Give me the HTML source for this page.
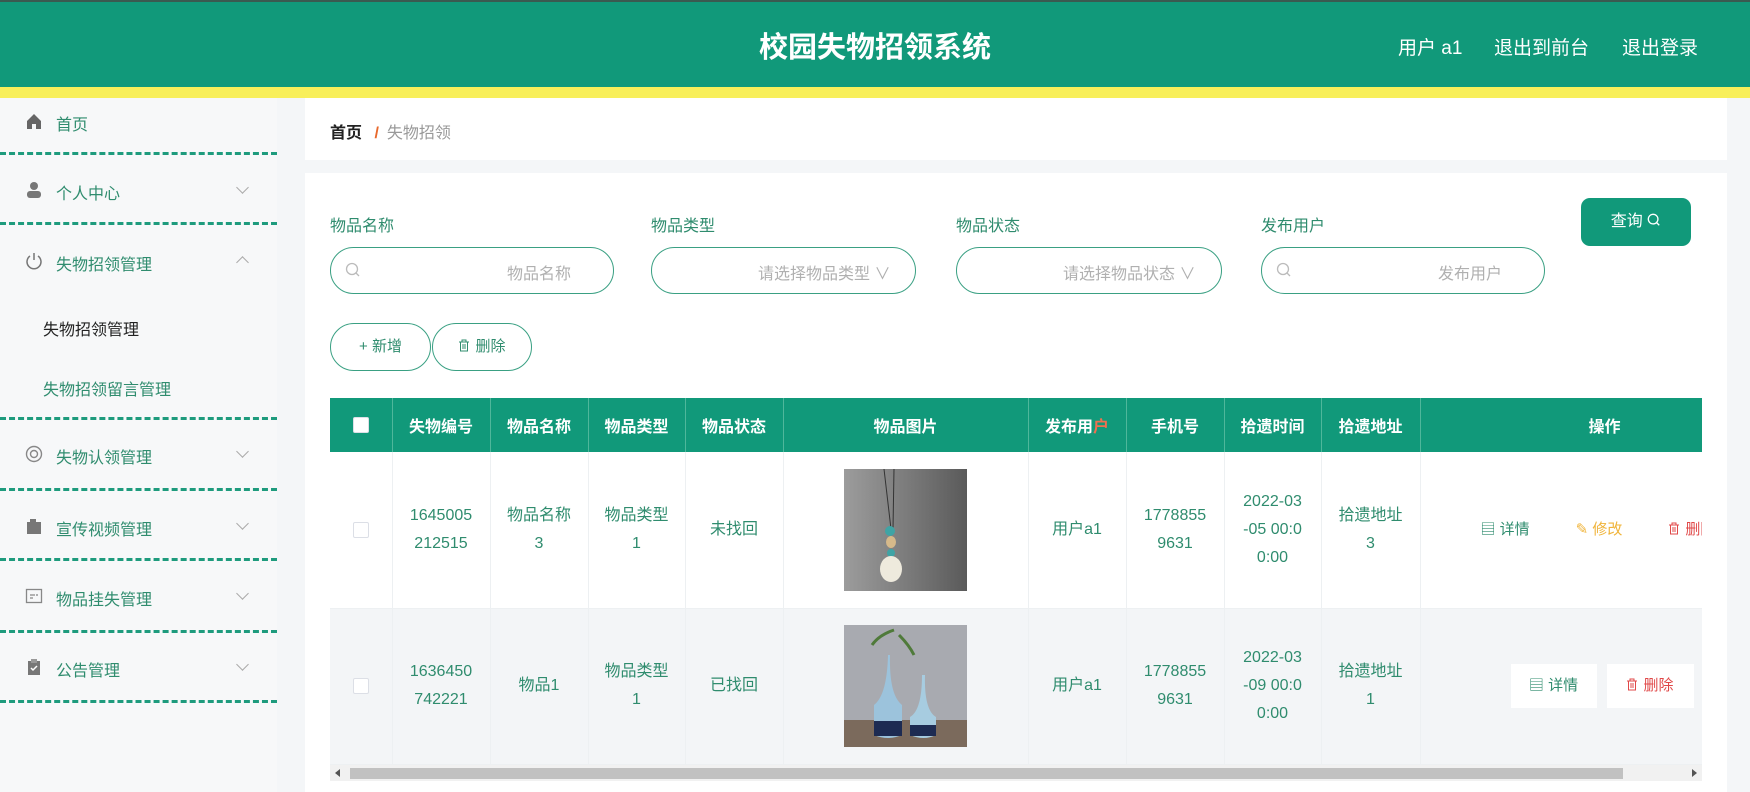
<!DOCTYPE html>
<html><head><meta charset="utf-8"><style>
*{box-sizing:border-box;margin:0;padding:0}
body{width:1750px;height:792px;overflow:hidden;background:#f4f6f8;font-family:"Liberation Sans","Noto Sans CJK SC",sans-serif;position:relative}
.hdr{position:absolute;left:0;top:0;width:1750px;height:87px;background:#11997a;border-top:2px solid #3a5a50}
.yl{position:absolute;left:0;top:87px;width:1750px;height:11px;background:#f8ef5a}
.title{position:absolute;left:0;width:1750px;top:24px;text-align:center;color:#fff;font-size:29px;font-weight:bold}
.hl{position:absolute;top:33px;color:#fff;font-size:19px}
.side{position:absolute;left:0;top:98px;width:277px;height:694px;background:#f7f8f9}
.mi{position:absolute;left:56px;font-size:16px;color:#2f8c6e}
.ic{position:absolute;left:25px;width:18px;height:18px}
.chev{position:absolute;left:238px;width:9px;height:9px;border-right:1px solid #aaa;border-bottom:1px solid #aaa;transform:rotate(45deg)}
.dl{position:absolute;left:0;width:277px;border-top:3px dashed #1e9b7d}
.card{position:absolute;background:#fff}
.lbl{position:absolute;top:212px;font-size:16px;color:#2f8c6e}
.inp{position:absolute;top:247px;height:47px;border:1.5px solid #3aa083;border-radius:24px;color:#b0b0b0;font-size:16px}
.inp span{position:absolute;top:12px}
.inp svg{position:absolute;left:14px;top:14px}
.btn2{position:absolute;top:323px;height:48px;border:1.5px solid #3aa083;border-radius:24px;font-size:15px;color:#2f8c6e;text-align:center;line-height:45px}
table{border-collapse:collapse;table-layout:fixed}
.tw{position:absolute;left:330px;top:398px;width:1372px;height:367px;overflow:hidden}
th{background:#11997a;color:#fff;font-size:16px;font-weight:bold;height:54px;border-right:1px solid #4fb79b;text-align:center}
td{text-align:center;color:#2f8c6e;font-size:16px;line-height:28px;border-right:1px solid #edf0f2;border-bottom:1px solid #edf0f2;height:156px;padding:0 6px}
tr.r2 td{background:#f3f5f7}
.cb{display:inline-block;width:16px;height:16px;border:1px solid #dcdfe6;background:#fff;border-radius:2px;vertical-align:middle}
.img{display:block;margin:0 auto;width:123px;height:122px}
.sb{position:absolute;left:330px;top:765px;width:1372px;height:16px;background:#f1f1f1}
.ti{display:inline-block;width:12px;height:13px;vertical-align:-1px;margin-right:5px}
</style></head><body>
<div class="hdr"></div><div class="yl"></div>
<div class="title">校园失物招领系统</div>
<div class="hl" style="left:1398px">用户 a1</div>
<div class="hl" style="left:1494px">退出到前台</div>
<div class="hl" style="left:1622px">退出登录</div>

<div class="side"></div>
<svg class="ic" style="top:112px" viewBox="0 0 18 18"><path d="M2 9L9 2l7 7v8h-5v-5H7v5H2z" fill="#666"/></svg>
<div class="mi" style="top:111px">首页</div>
<div class="dl" style="top:152px"></div>
<svg class="ic" style="top:181px" viewBox="0 0 18 18"><circle cx="9" cy="5" r="4" fill="#777"/><rect x="2" y="10" width="14" height="7" rx="3" fill="#777"/></svg>
<div class="mi" style="top:180px">个人中心</div><div class="chev" style="top:183px"></div>
<div class="dl" style="top:222px"></div>
<svg class="ic" style="top:252px" viewBox="0 0 18 18"><path d="M5 4a7 7 0 1 0 8 0M9 1v7" fill="none" stroke="#777" stroke-width="1.5"/></svg>
<div class="mi" style="top:251px">失物招领管理</div><div class="chev" style="top:258px;transform:rotate(225deg)"></div>
<div class="mi" style="top:316px;left:43px;color:#222">失物招领管理</div>
<div class="mi" style="top:376px;left:43px">失物招领留言管理</div>
<div class="dl" style="top:417px"></div>
<svg class="ic" style="top:445px" viewBox="0 0 18 18"><circle cx="9" cy="9" r="7.5" fill="none" stroke="#888" stroke-width="1.4"/><circle cx="9" cy="9" r="3.5" fill="none" stroke="#888" stroke-width="1.4"/></svg>
<div class="mi" style="top:444px">失物认领管理</div><div class="chev" style="top:447px"></div>
<div class="dl" style="top:488px"></div>
<svg class="ic" style="top:517px" viewBox="0 0 18 18"><rect x="2" y="5" width="14" height="12" fill="#777"/><rect x="5" y="2" width="6" height="4" fill="#777"/></svg>
<div class="mi" style="top:516px">宣传视频管理</div><div class="chev" style="top:519px"></div>
<div class="dl" style="top:558px"></div>
<svg class="ic" style="top:587px" viewBox="0 0 18 18"><rect x="1.5" y="2.5" width="15" height="13" fill="none" stroke="#888" stroke-width="1.3"/><path d="M5 8h5M5 11h3M12 7v2" stroke="#888" stroke-width="1.3"/></svg>
<div class="mi" style="top:586px">物品挂失管理</div><div class="chev" style="top:589px"></div>
<div class="dl" style="top:630px"></div>
<svg class="ic" style="top:658px" viewBox="0 0 18 18"><rect x="3" y="3" width="12" height="14" fill="#777"/><rect x="6" y="1" width="6" height="4" fill="#999"/><path d="M6 10l2 2 4-4" stroke="#fff" stroke-width="1.5" fill="none"/></svg>
<div class="mi" style="top:657px">公告管理</div><div class="chev" style="top:660px"></div>
<div class="dl" style="top:700px"></div>

<div class="card" style="left:305px;top:98px;width:1422px;height:62px"></div>
<div style="position:absolute;left:330px;top:119px;font-size:16px;color:#222;font-weight:bold">首页 <span style="color:#e8692d;margin:0 8px">/</span><span style="color:#999;font-weight:normal">失物招领</span></div>

<div class="card" style="left:305px;top:173px;width:1422px;height:619px"></div>
<div class="lbl" style="left:330px">物品名称</div>
<div class="lbl" style="left:651px">物品类型</div>
<div class="lbl" style="left:956px">物品状态</div>
<div class="lbl" style="left:1261px">发布用户</div>
<div class="inp" style="left:330px;width:284px"><svg width="16" height="16" viewBox="0 0 16 16"><circle cx="7" cy="7" r="5.5" fill="none" stroke="#bbb" stroke-width="1.3"/><path d="M11 11l3 3" stroke="#bbb" stroke-width="1.3"/></svg><span style="left:176px">物品名称</span></div>
<div class="inp" style="left:651px;width:265px"><span style="left:106px">请选择物品类型 ∨</span></div>
<div class="inp" style="left:956px;width:266px"><span style="left:106px">请选择物品状态 ∨</span></div>
<div class="inp" style="left:1261px;width:284px"><svg width="16" height="16" viewBox="0 0 16 16"><circle cx="7" cy="7" r="5.5" fill="none" stroke="#bbb" stroke-width="1.3"/><path d="M11 11l3 3" stroke="#bbb" stroke-width="1.3"/></svg><span style="left:176px">发布用户</span></div>
<div style="position:absolute;left:1581px;top:198px;width:110px;height:48px;background:#11997a;border-radius:9px;color:#fff;font-size:16px;text-align:center;line-height:48px">查询 <svg width="14" height="14" viewBox="0 0 16 16" style="vertical-align:-1px"><circle cx="7" cy="7" r="5.5" fill="none" stroke="#fff" stroke-width="1.5"/><path d="M11 11l3 3" stroke="#fff" stroke-width="1.5"/></svg></div>
<div class="btn2" style="left:330px;width:101px">+ 新增</div>
<div class="btn2" style="left:432px;width:100px"><svg class="ti" viewBox="0 0 12 13"><path d="M1 3h10M4 3V1h4v2M2.5 3v9h7V3M5 5v5M7 5v5" fill="none" stroke="#2f8c6e"/></svg>删除</div>

<div class="tw"><table style="width:1520px">
<colgroup><col style="width:62px"><col style="width:98px"><col style="width:98px"><col style="width:97px"><col style="width:98px"><col style="width:245px"><col style="width:98px"><col style="width:98px"><col style="width:97px"><col style="width:99px"><col style="width:430px"></colgroup>
<tr><th><span class="cb"></span></th><th>失物编号</th><th>物品名称</th><th>物品类型</th><th>物品状态</th><th>物品图片</th><th>发布用<span style="color:#f07050">户</span></th><th>手机号</th><th>拾遗时间</th><th>拾遗地址</th><th style="text-align:left;padding-left:168px">操作</th></tr>
<tr><td><span class="cb"></span></td><td>1645005<br>212515</td><td>物品名称<br>3</td><td>物品类型<br>1</td><td>未找回</td><td><svg class="img" viewBox="0 0 123 122"><defs><linearGradient id="g1" x1="0" x2="1"><stop offset="0" stop-color="#9c9c9c"/><stop offset=".5" stop-color="#7c7c7c"/><stop offset="1" stop-color="#5a5a5a"/></linearGradient></defs><rect width="123" height="122" fill="url(#g1)"/><path d="M40 0L47 60M50 0L49 60" stroke="#333"/><circle cx="46" cy="62" r="5" fill="#3fa4a5"/><ellipse cx="47" cy="73" rx="5" ry="6" fill="#d6b98a"/><circle cx="47" cy="84" r="4" fill="#3fa4a5"/><ellipse cx="47" cy="100" rx="11" ry="13" fill="#eeeadd"/></svg></td><td>用户a1</td><td>1778855<br>9631</td><td>2022-03<br>-05 00:0<br>0:00</td><td>拾遗地址<br>3</td><td style="text-align:left;padding-left:60px;font-size:15px"><span style="color:#2f8c6e">▤ 详情</span><span style="color:#f0b43a;margin-left:46px">✎ 修改</span><span style="color:#e04848;margin-left:46px"><svg class="ti" viewBox="0 0 12 13"><path d="M1 3h10M4 3V1h4v2M2.5 3v9h7V3M5 5v5M7 5v5" fill="none" stroke="#e04848"/></svg>删除</span></td></tr>
<tr class="r2"><td><span class="cb"></span></td><td>1636450<br>742221</td><td>物品1</td><td>物品类型<br>1</td><td>已找回</td><td><svg class="img" viewBox="0 0 123 122"><rect width="123" height="122" fill="#a8aab0"/><rect y="95" width="123" height="27" fill="#7b6a5c"/><path d="M44 30Q43 70 30 80L30 110Q44 116 58 110L58 80Q45 70 46 30z" fill="#9cc3dc"/><rect x="30" y="96" width="28" height="15" fill="#1d2b52"/><path d="M78 50Q78 85 66 92L66 110Q80 116 92 110L92 92Q80 85 81 50z" fill="#a7cce0"/><rect x="66" y="100" width="26" height="11" fill="#1d2b52"/><path d="M28 20Q35 10 50 5M55 10Q65 20 70 30" stroke="#4f7a3a" stroke-width="3" fill="none"/></svg></td><td>用户a1</td><td>1778855<br>9631</td><td>2022-03<br>-09 00:0<br>0:00</td><td>拾遗地址<br>1</td><td style="text-align:left;padding-left:90px;font-size:15px"><span style="display:inline-block;width:86px;height:44px;background:#fff;line-height:44px;text-align:center;color:#2f8c6e">▤ 详情</span><span style="display:inline-block;width:87px;height:44px;background:#fff;line-height:44px;text-align:center;color:#e04848;margin-left:10px"><svg class="ti" viewBox="0 0 12 13"><path d="M1 3h10M4 3V1h4v2M2.5 3v9h7V3M5 5v5M7 5v5" fill="none" stroke="#e04848"/></svg>删除</span></td></tr>
</table></div>
<div class="sb"><div style="position:absolute;left:20px;top:3px;width:1273px;height:11px;background:#c1c1c1"></div><div style="position:absolute;left:5px;top:4px;border-right:5px solid #555;border-top:4px solid transparent;border-bottom:4px solid transparent"></div><div style="position:absolute;right:5px;top:4px;border-left:5px solid #555;border-top:4px solid transparent;border-bottom:4px solid transparent"></div></div>
</body></html>
